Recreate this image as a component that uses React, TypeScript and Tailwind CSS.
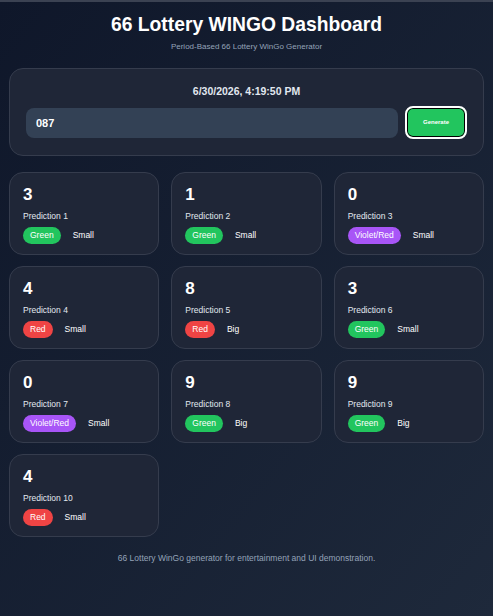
import * as React from "react";

type Prediction = {
  number: number;
  color: "Green" | "Red" | "Violet/Red";
  size: "Small" | "Big";
};

const predictions: Prediction[] = [
  { number: 3, color: "Green", size: "Small" },
  { number: 1, color: "Green", size: "Small" },
  { number: 0, color: "Violet/Red", size: "Small" },
  { number: 4, color: "Red", size: "Small" },
  { number: 8, color: "Red", size: "Big" },
  { number: 3, color: "Green", size: "Small" },
  { number: 0, color: "Violet/Red", size: "Small" },
  { number: 9, color: "Green", size: "Big" },
  { number: 9, color: "Green", size: "Big" },
  { number: 4, color: "Red", size: "Small" },
];

const badgeColors: Record<Prediction["color"], string> = {
  Green: "bg-[#22c55e]",
  Red: "bg-[#ef4444]",
  "Violet/Red": "bg-[#a855f7]",
};

function PredictionCard({ item, index }: { item: Prediction; index: number }) {
  return (
    <div className="rounded-[14px] border border-[#353c4d] bg-[#1f2637] px-[13px] pt-[11px] pb-[10px]">
      <div className="text-[17px] font-bold leading-[21px] text-white">
        {item.number}
      </div>
      <div className="mt-[5px] text-[8.5px] leading-[12px] text-[#e2e8f0]">
        Prediction {index + 1}
      </div>
      <div className="mt-[5px] flex items-center gap-[12px]">
        <span
          className={`${badgeColors[item.color]} rounded-full px-[7px] text-[8.5px] leading-[17px] text-white`}
        >
          {item.color}
        </span>
        <span className="text-[8.5px] text-white">{item.size}</span>
      </div>
    </div>
  );
}

export default function App() {
  const [period, setPeriod] = React.useState("087");

  return (
    <div
      className="min-h-screen border-t-2 border-[#3b4252] bg-gradient-to-br from-[#0f172a] to-[#1e293b] px-[9px] pb-6 text-white"
      style={{ fontFamily: '"Liberation Sans", Arial, sans-serif' }}
    >
      <h1 className="pt-[11px] text-center text-[19.3px] font-bold leading-[24px]">
        66 Lottery WINGO Dashboard
      </h1>
      <p className="mt-[4px] text-center text-[8px] text-[#94a3b8]">
        Period-Based 66 Lottery WinGo Generator
      </p>

      <div className="mt-[15px] rounded-[14px] border border-[#353c4d] bg-[#1f2637] px-[16px] pt-[15px] pb-[16px]">
        <div className="text-center text-[10.5px] font-semibold leading-[14px] text-[#e2e8f0]">
          6/30/2026, 4:19:50 PM
        </div>
        <div className="mt-[8px] flex items-center gap-[7px]">
          <input
            value={period}
            onChange={(e) => setPeriod(e.target.value)}
            className="h-[30px] flex-1 rounded-[8px] bg-[#334155] px-[10px] text-[11px] font-bold text-white outline-none"
          />
          <button
            type="button"
            className="h-[33px] w-[62px] rounded-[8px] border-2 border-white bg-[#22c55e] text-[6px] font-bold text-white shadow-[inset_0_0_0_1px_#000]"
          >
            Generate
          </button>
        </div>
      </div>

      <div className="mt-[16px] grid grid-cols-3 gap-x-[12px] gap-y-[11px]">
        {predictions.map((p, i) => (
          <PredictionCard key={i} item={p} index={i} />
        ))}
      </div>

      <p className="mt-[15px] text-center text-[8.5px] text-[#94a3b8]">
        66 Lottery WinGo generator for entertainment and UI demonstration.
      </p>
    </div>
  );
}
